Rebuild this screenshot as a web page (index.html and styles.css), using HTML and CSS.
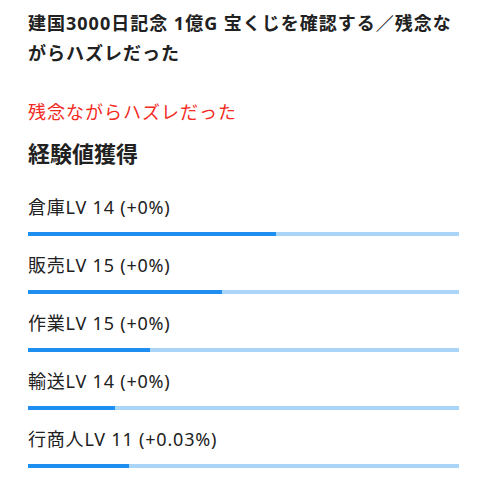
FILE: index.html
```html
<!DOCTYPE html>
<html lang="ja">
<head>
<meta charset="utf-8">
<link rel="stylesheet" href="styles.css">
</head>
<body>
<div class="page">
  <h1 class="title">建国3000日記念 1億G 宝くじを確認する／残念ながらハズレだった</h1>
  <p class="result">残念ながらハズレだった</p>
  <h2 class="section">経験値獲得</h2>
  <div class="skills">
    <div class="skill">
      <div class="label">倉庫LV 14 (+0%)</div>
      <div class="track"><div class="fill" style="width:57.5%"></div></div>
    </div>
    <div class="skill">
      <div class="label">販売LV 15 (+0%)</div>
      <div class="track"><div class="fill" style="width:45%"></div></div>
    </div>
    <div class="skill">
      <div class="label">作業LV 15 (+0%)</div>
      <div class="track"><div class="fill" style="width:28.3%"></div></div>
    </div>
    <div class="skill">
      <div class="label">輸送LV 14 (+0%)</div>
      <div class="track"><div class="fill" style="width:20.2%"></div></div>
    </div>
    <div class="skill">
      <div class="label">行商人LV 11 (+0.03%)</div>
      <div class="track"><div class="fill" style="width:23.4%"></div></div>
    </div>
  </div>
</div>
</body>
</html>
```
FILE: styles.css
```css
html, body {
  margin: 0;
  padding: 0;
  background: #ffffff;
}
body {
  font-family: "Noto Sans", "Noto Sans CJK JP", sans-serif;
  color: #212121;
}
.page {
  padding: 8px 28px 20px 28px;
}
.title {
  margin: 0;
  font-size: 18px;
  font-weight: 700;
  line-height: 30px;
  letter-spacing: 1px;
}
.result {
  margin: 29px 0 0 0;
  font-size: 18px;
  line-height: 30px;
  color: #f22b22;
  letter-spacing: 1px;
}
.section {
  margin: 11px 0 0 0;
  font-size: 22px;
  font-weight: 700;
  line-height: 30px;
}
.skills {
  display: flex;
  flex-direction: column;
  margin-top: 24px;
}
.skill {
  display: flex;
  flex-direction: column;
  height: 58px;
}
.label {
  font-size: 18px;
  line-height: 24px;
  padding-top: 3px;
  letter-spacing: 0.8px;
}
.track {
  margin-top: 13px;
  height: 4px;
  background: #abd5f8;
  overflow: hidden;
}
.fill {
  height: 100%;
  background: #1e8ef0;
}
```
